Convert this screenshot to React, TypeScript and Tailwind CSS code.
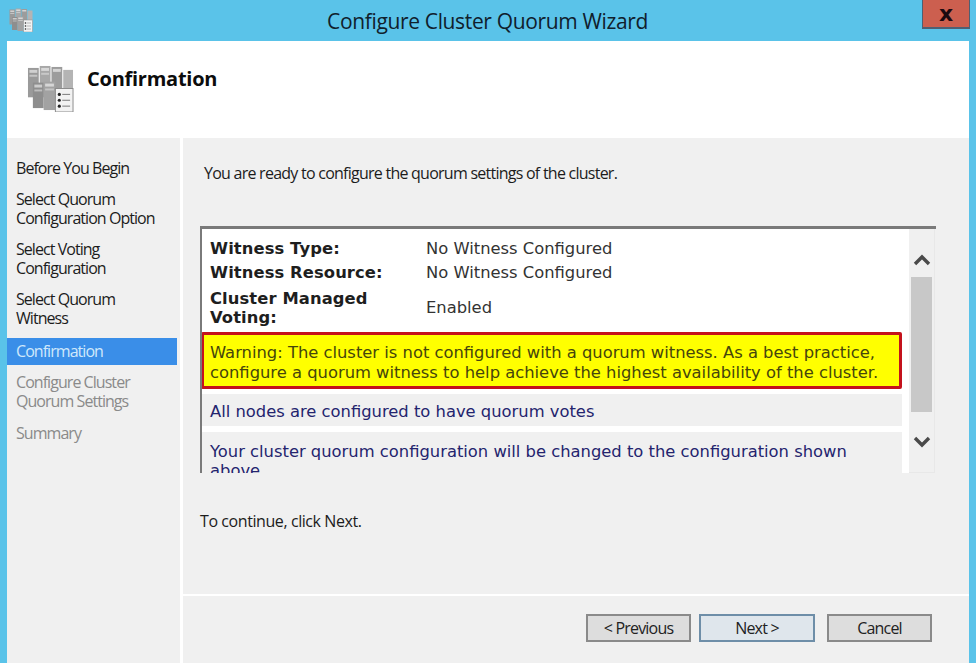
import React from 'react';

const segoe = "font-['Open_Sans',sans-serif]";

// Wizard steps in the left rail
const steps = [
  { lines: ['Before You Begin'], cls: 'h-[34px] pt-[3px] text-[#1c1c1c]' },
  { lines: ['Select Quorum', 'Configuration Option'], cls: 'h-[50px] text-[#1c1c1c]' },
  { lines: ['Select Voting', 'Configuration'], cls: 'h-[50px] text-[#1c1c1c]' },
  { lines: ['Select Quorum', 'Witness'], cls: 'h-[48px] text-[#1c1c1c]' },
  { lines: ['Confirmation'], cls: 'h-[27px] pt-[4px] bg-[#3a8ee8] text-[#cfe8fb]' },
  { lines: ['Configure Cluster', 'Quorum Settings'], cls: 'h-[51px] pt-[8px] text-[#8a8a8a]' },
  { lines: ['Summary'], cls: 'h-[30px] pt-[8px] text-[#8a8a8a]' },
];

function ClusterIcon({ className }: { className: string }) {
  return (
    <svg viewBox="0 0 48 48" className={className}>
      <rect x="1" y="3" width="11" height="30" fill="#9a9a9a" />
      <rect x="2.5" y="5" width="8" height="3" fill="#d0d0d0" />
      <rect x="2.5" y="10" width="8" height="2" fill="#c4c4c4" />
      <rect x="13" y="1" width="11" height="32" fill="#a8a8a8" />
      <rect x="14.5" y="3" width="8" height="3" fill="#d8d8d8" />
      <rect x="14.5" y="8" width="8" height="2" fill="#c8c8c8" />
      <rect x="25" y="2" width="11" height="32" fill="#9c9c9c" />
      <rect x="26.5" y="4" width="8" height="3" fill="#d4d4d4" />
      <rect x="37" y="5" width="10" height="26" fill="#b4b4b4" />
      <rect x="6" y="18" width="11" height="26" fill="#8e8e8e" />
      <rect x="7.5" y="20" width="8" height="3" fill="#cccccc" />
      <rect x="7.5" y="25" width="8" height="2" fill="#bdbdbd" />
      <rect x="17" y="17" width="12" height="29" fill="#a2a2a2" />
      <rect x="18.5" y="19" width="9" height="3" fill="#d6d6d6" />
      <rect x="18.5" y="24" width="9" height="2" fill="#c4c4c4" />
      <rect x="29" y="24" width="18" height="24" fill="#f2f2f2" stroke="#8c8c8c" />
      <circle cx="33" cy="30" r="1.6" fill="#222" />
      <circle cx="33" cy="36" r="1.6" fill="#222" />
      <circle cx="33" cy="42" r="1.6" fill="#222" />
      <rect x="36" y="29.5" width="8" height="1" fill="#777" />
      <rect x="36" y="35.5" width="8" height="1" fill="#777" />
      <rect x="36" y="41.5" width="8" height="1" fill="#777" />
    </svg>
  );
}

function Button({ label, className }: { label: string; className: string }) {
  return (
    <button className={`h-[28px] border-2 text-[16px] tracking-[-0.8px] text-[#222] ${segoe} ${className}`}>
      {label}
    </button>
  );
}

export default function App() {
  return (
    <div className={`w-[976px] h-[663px] overflow-hidden bg-[#5ac3e9] flex flex-col ${segoe}`}>
      {/* Title bar */}
      <div className="h-[41px] shrink-0 flex items-start">
        <ClusterIcon className="w-[24px] h-[24px] ml-[9px] mt-[8px]" />
        <div className="flex-1 text-center text-[21px] leading-[28px] pt-[7px] tracking-[-0.35px] text-[#10202c] pl-[20px]">
          Configure Cluster Quorum Wizard
        </div>
        <div className="w-[48px] h-[29px] mr-[6px] bg-[#cc5f4f] border-b-2 border-x border-[#4e5f72] flex items-center justify-center">
          <span className="text-[#1c0a10] text-[22px] font-bold leading-none font-['DejaVu_Sans',sans-serif]">x</span>
        </div>
      </div>

      <div className="flex-1 min-h-0 mx-[7px] flex flex-col bg-white">
        {/* Header */}
        <div className="h-[95px] shrink-0 flex items-start">
          <ClusterIcon className="w-[47px] h-[47px] ml-[20px] mt-[24px]" />
          <div className="ml-[13px] mt-[24px] text-[20px] leading-[27px] font-bold tracking-[-0.25px] text-[#0c0c0c]">
            Confirmation
          </div>
        </div>

        <div className="flex-1 min-h-0 flex gap-[3px] pt-[2px]">
          {/* Step list */}
          <div className="w-[173px] shrink-0 bg-[#f0f0f0] pt-[18px] pr-[3px] text-[16px] leading-[19px] tracking-[-0.95px]">
            {steps.map((step) => (
              <div key={step.lines.join()} className={`pl-[9px] ${step.cls}`}>
                {step.lines.map((line) => (
                  <div key={line}>{line}</div>
                ))}
              </div>
            ))}
          </div>

          <div className="flex-1 bg-[#f0f0f0] flex flex-col">
            <div className="flex-1 pl-[17px] pr-[33px]">
              <p className="mt-[24px] ml-[4px] text-[16px] leading-[22px] tracking-[-0.75px] text-[#1c1c1c]">
                You are ready to configure the quorum settings of the cluster.
              </p>

              {/* Summary box */}
              <div className="mt-[42px] flex border-t-[3px] border-[#7a7a7a] font-['DejaVu_Sans',sans-serif] text-[16.35px]">
                <div className="w-[709px] h-[244px] bg-white overflow-hidden pt-[8px] border-l-2 border-[#7a7a7a]">
                  <div className="pl-[8px] text-[#1e1e1e]">
                    <div className="flex h-[24px] leading-[24px]">
                      <div className="w-[216px] font-bold tracking-[0.1px]">Witness Type:</div>
                      <div className="text-[#333]">No Witness Configured</div>
                    </div>
                    <div className="flex h-[27px] leading-[24px]">
                      <div className="w-[216px] font-bold tracking-[0.1px]">Witness Resource:</div>
                      <div className="text-[#333]">No Witness Configured</div>
                    </div>
                    <div className="flex items-center h-[40px] leading-[19px]">
                      <div className="w-[216px] font-bold tracking-[0.1px]">
                        Cluster Managed
                        <br />
                        Voting:
                      </div>
                      <div className="text-[#333] pb-[2px]">Enabled</div>
                    </div>
                  </div>

                  <div className="mt-[4px] -ml-[1px] w-[701px] h-[57px] border-[3px] border-[#c4121c] rounded-[2px] bg-[#ffff00] pl-[6px] pt-[8px] leading-[20px] text-[#45450c] whitespace-nowrap">
                    Warning: The cluster is not configured with a quorum witness. As a best practice,
                    <br />
                    configure a quorum witness to help achieve the highest availability of the cluster.
                  </div>

                  <div className="mt-[5px] w-[700px] h-[32px] bg-[#f0f0f0] pl-[8px] pt-[2px] leading-[32px] text-[#24246e]">
                    All nodes are configured to have quorum votes
                  </div>
                  <div className="mt-[6px] w-[700px] h-[60px] bg-[#f0f0f0] pl-[8px] pt-[10px] leading-[19px] text-[#24246e] whitespace-nowrap">
                    Your cluster quorum configuration will be changed to the configuration shown
                    <br />
                    above
                  </div>
                </div>

                {/* Scrollbar */}
                <div className="w-[26px] h-[244px] bg-[#f0f0f0] border-r border-b border-[#e8e8e8] flex flex-col items-center">
                  <svg viewBox="0 0 18 12" className="w-[18px] h-[12px] mt-[25px]">
                    <path d="M2 10 L9 3 L16 10" fill="none" stroke="#4a4a4a" strokeWidth="3.4" />
                  </svg>
                  <div className="w-[21px] h-[135px] mt-[11px] bg-[#c8c8c8]" />
                  <svg viewBox="0 0 18 12" className="w-[18px] h-[12px] mt-[24px]">
                    <path d="M2 2 L9 9 L16 2" fill="none" stroke="#4a4a4a" strokeWidth="3.4" />
                  </svg>
                </div>
              </div>

              <p className="mt-[37px] text-[16px] leading-[22px] tracking-[-0.42px] text-[#1c1c1c]">
                To continue, click Next.
              </p>
            </div>

            {/* Footer buttons */}
            <div className="h-[69px] shrink-0 border-t-2 border-white flex justify-end pt-[18px] pr-[37px]">
              <Button label="< Previous" className="w-[105px] border-[#8a8a8a] bg-[#dddddd]" />
              <Button label="Next >" className="ml-[8px] w-[116px] border-[#6e8ea8] bg-[#dfe6ec]" />
              <Button label="Cancel" className="ml-[12px] w-[105px] border-[#8a8a8a] bg-[#dddddd]" />
            </div>
          </div>
        </div>
      </div>
    </div>
  );
}
